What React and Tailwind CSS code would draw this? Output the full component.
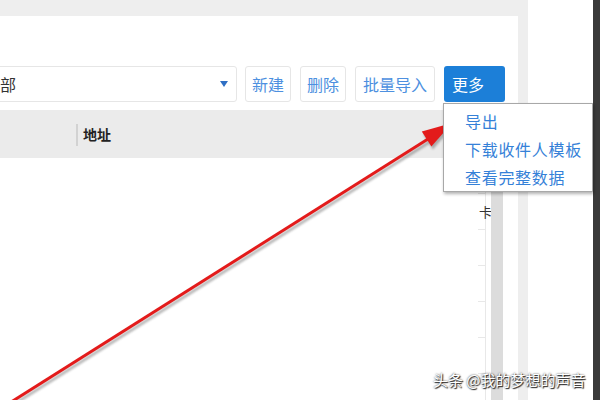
import React from "react";

const font = { fontFamily: '"Noto Sans CJK SC", "Noto Sans", sans-serif' };

function Btn({ children, w }) {
  return (
    <div
      className={`h-[36px] ${w} flex items-center justify-center rounded-[3px] border border-[#e6e6e6] bg-white text-[16px] text-[#4d90e0] shrink-0`}
    >
      {children}
    </div>
  );
}

function Row({ children }) {
  return (
    <div className="flex h-[36px]">
      <div className="w-[478px] shrink-0" />
      <div className="w-[8px] shrink-0 border-b border-r border-[#e8e8e8] flex items-center text-[13px] leading-none text-[#333] overflow-visible whitespace-nowrap">
        {children}
      </div>
    </div>
  );
}

export default function App() {
  return (
    <div className="relative w-[600px] h-[400px] overflow-hidden bg-white flex" style={font}>
      {/* left gray area with white card */}
      <div className="w-[528px] h-full bg-[#eeeeee] pt-[16px] pr-[10px] shrink-0">
        <div className="h-full bg-white overflow-hidden flex flex-col">
          {/* toolbar */}
          <div className="flex items-center mt-[50px] h-[36px]">
            <div className="-ml-[60px] w-[297px] h-[36px] shrink-0 rounded-[3px] border border-[#e6e6e6] bg-white flex items-center pl-[59px] pr-[8px]">
              <span className="text-[16px] text-[#333] whitespace-nowrap">部</span>
              <div className="flex-1" />
              <svg width="8" height="6" viewBox="0 0 8 6">
                <polygon points="0,0 8,0 4,6" fill="#2f6fc4" />
              </svg>
            </div>
            <div className="w-[8px] shrink-0" />
            <Btn w="w-[46px]">新建</Btn>
            <div className="w-[9px] shrink-0" />
            <Btn w="w-[46px]">删除</Btn>
            <div className="w-[9px] shrink-0" />
            <Btn w="w-[80px]">批量导入</Btn>
            <div className="w-[9px] shrink-0" />
            <div className="h-[36px] w-[61px] shrink-0 rounded-[3px] bg-[#1c7fd8] flex items-center pl-[8px] text-[16px] text-white">
              更多
            </div>
          </div>
          {/* table */}
          <div className="mt-[8px] flex flex-1">
            <div className="w-[491px] shrink-0 flex flex-col">
              <div className="h-[48px] bg-[#ebebeb] flex items-center">
                <div className="w-[76px] shrink-0" />
                <div className="w-[2px] h-[22px] bg-[#d2d2d2] self-start mt-[14px]" />
                <span className="ml-[5px] text-[14px] font-semibold text-[#222]">地址</span>
              </div>
              <Row />
              <Row>
                <span className="ml-[1px]">卡</span>
              </Row>
              <Row />
              <Row />
              <Row />
              <Row />
              <Row />
            </div>
            <div className="w-[12px] shrink-0 bg-[#dcdcdc] mt-[48px]" />
            <div className="flex-1" />
          </div>
        </div>
      </div>
      <div className="w-[65px] h-full bg-white shrink-0" />
      <div className="w-[7px] h-full bg-[#3a3a3a] shrink-0" />

      {/* arrow */}
      <svg className="absolute left-0 top-0 pointer-events-none" width="600" height="400" viewBox="0 0 600 400">
        <defs>
          <filter id="blur" x="-10%" y="-10%" width="120%" height="120%">
            <feGaussianBlur stdDeviation="1.2" />
          </filter>
        </defs>
        <g transform="translate(1.5,3)" filter="url(#blur)" opacity="0.35">
          <line x1="8" y1="404" x2="428" y2="139" stroke="#333" strokeWidth="3" />
          <polygon points="452,123 421.8,131.4 431.4,146.6" fill="#333" />
        </g>
        <line x1="8" y1="404" x2="428" y2="139" stroke="#e31b1b" strokeWidth="3" />
        <polygon points="452,123 421.8,131.4 431.4,146.6" fill="#e31b1b" />
      </svg>

      {/* dropdown menu */}
      <div className="absolute left-[443px] top-[103px] w-[150px] h-[89px] bg-white border border-[#a8a8a8] shadow-[1px_2px_3px_rgba(0,0,0,0.3)] pt-[3px] pl-[21px]">
        <div className="leading-[28px] text-[16px] tracking-[0.7px] text-[#3581d8] whitespace-nowrap">导出</div>
        <div className="leading-[28px] text-[16px] tracking-[0.7px] text-[#3581d8] whitespace-nowrap">下载收件人模板</div>
        <div className="leading-[28px] text-[16px] tracking-[0.7px] text-[#3581d8] whitespace-nowrap">查看完整数据</div>
      </div>

      {/* watermark */}
      <div className="absolute left-[433px] top-[369px] text-[15px] leading-[22px] text-white whitespace-nowrap [text-shadow:0_0_2px_#333,1px_1px_1px_#222]">
        头条 @我的梦想的声音
      </div>
    </div>
  );
}
